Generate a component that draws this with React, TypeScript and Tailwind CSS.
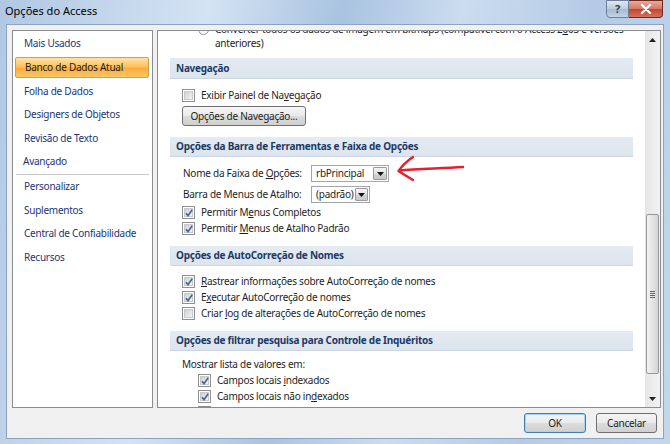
import type { ReactNode } from 'react'

const leftItems = [
  'Mais Usados',
  'Banco de Dados Atual',
  'Folha de Dados',
  'Designers de Objetos',
  'Revisão de Texto',
  'Avançado',
]
const leftItems2 = ['Personalizar', 'Suplementos', 'Central de Confiabilidade', 'Recursos']

function Check({ checked }: { checked?: boolean }) {
  return (
    <span className="relative flex h-[13px] w-[13px] shrink-0 items-center justify-center border border-[#8e8f8f] bg-white">
      <span className="h-[9px] w-[9px] border border-[#c7c9cc] bg-[linear-gradient(135deg,#cdd0d4,#f3f4f5)]" />
      {checked && (
        <svg className="absolute left-[1px] top-[1px]" width="10" height="10" viewBox="0 0 10 10">
          <path d="M2 5.2 L4 7.6 L8.2 1.8" fill="none" stroke="#4a5f8e" strokeWidth="1.6" />
        </svg>
      )}
    </span>
  )
}

function CheckRow({ checked, children, indent }: { checked?: boolean; children: ReactNode; indent?: boolean }) {
  return (
    <div className={`flex h-[16px] items-center gap-[6px] ${indent ? 'pl-[40px]' : 'pl-[24px]'}`}>
      <Check checked={checked} />
      <span>{children}</span>
    </div>
  )
}

function Section({ title, className = '' }: { title: string; className?: string }) {
  return (
    <div
      className={`mx-[12px] flex h-[20px] items-center border-b border-[#cdd6e0] bg-[linear-gradient(#e5ebf2,#dce4ed)] pl-[6px] font-bold text-[#1d3a66] ${className}`}
    >
      {title}
    </div>
  )
}

function Combo({ value, width }: { value: string; width: string }) {
  return (
    <div className={`flex h-[17px] ${width} border border-[#a5a5a5] bg-white`}>
      <span className="flex-1 pl-[4px] leading-[15px]">{value}</span>
      <span className="m-[1px] flex w-[14px] items-center justify-center rounded-[1px] border border-[#9a9a9a] bg-[linear-gradient(#f4f4f4,#e4e4e4_50%,#d3d3d3_51%,#c9c9c9)]">
        <svg width="7" height="4" viewBox="0 0 7 4">
          <path d="M0 0 H7 L3.5 4 Z" fill="#111" />
        </svg>
      </span>
    </div>
  )
}

function WinButton({ children, primary, className = '' }: { children: ReactNode; primary?: boolean; className?: string }) {
  return (
    <button
      className={`flex h-[20px] items-center justify-center rounded-[3px] border ${
        primary ? 'border-[#3c7fb1] shadow-[inset_0_0_0_1px_#9fd5f6]' : 'border-[#707070]'
      } bg-[linear-gradient(#f5f5f5,#eaeaea_48%,#dcdcdc_52%,#d0d0d0)] text-[#1e1e1e] ${className}`}
    >
      {children}
    </button>
  )
}

export default function App() {
  return (
    <div className="relative flex h-[444px] w-[670px] flex-col overflow-hidden bg-[linear-gradient(100deg,#b0c8e3,#d4e3f3_28%,#a9c3e0_46%,#cbdcef_62%,#b4cbe5_80%,#c4d7ec)] font-['Noto_Sans','Open_Sans',sans-serif] text-[10px] tracking-[-0.25px] text-[#1e1e1e]">
      {/* title bar */}
      <div className="flex h-[24px] shrink-0 items-center pb-[2px] pl-[5px] text-[11px] tracking-normal text-black">Opções do Access</div>
      <div className="absolute right-[7px] top-0 flex h-[18px]">
        <div className="flex w-[23px] items-center justify-center rounded-bl-[4px] border border-[#6b7f99] bg-[linear-gradient(#dfe8f3,#bccbdd_50%,#a7b9d0_51%,#c3d2e4)] text-[11px] font-bold text-[#2a3a4f]">
          ?
        </div>
        <div className="flex w-[34px] items-center justify-center rounded-br-[4px] border border-l-0 border-[#6a2a20] bg-[linear-gradient(#e9a99c,#d67a67_48%,#c4452f_52%,#d2735c)]">
          <svg width="12" height="10" viewBox="0 0 12 10">
            <path d="M2 1 L10 9 M10 1 L2 9" stroke="#fff" strokeWidth="2.4" strokeLinecap="round" />
          </svg>
        </div>
      </div>

      {/* client */}
      <div className="mx-[6px] mb-[5px] flex flex-1 flex-col border border-[#8ba3c0] bg-[#f0f0f0] pl-[5px] pr-[2px] pt-[5px]">
        <div className="flex h-[378px] gap-[4px]">
          {/* left nav */}
          <div className="w-[141px] border border-[#8a8d92] bg-white pt-[1.2px] text-[#1c3577]">
            {leftItems.map((label) => (
              <div key={label} className="flex h-[23.6px] items-center">
                {label === 'Banco de Dados Atual' ? (
                  <div className="ml-[2px] mr-[3px] flex h-[21px] flex-1 items-center rounded-[2px] border border-[#d99b45] bg-[linear-gradient(#ffe3a6,#ffc25e_45%,#ffab3a_55%,#ffc768)] pl-[9px] text-[#1a1a1a]">
                    {label}
                  </div>
                ) : (
                  <span className={label === 'Avançado' ? 'pl-[10px]' : 'pl-[11px]'}>{label}</span>
                )}
              </div>
            ))}
            <div className="mx-[3px] h-[1px] bg-[#c8c8c8]" />
            {leftItems2.map((label) => (
              <div key={label} className="flex h-[23.6px] items-center pl-[11px]">
                {label}
              </div>
            ))}
          </div>

          {/* right content */}
          <div className="flex flex-1 border border-[#8a8d92] bg-white">
            <div className="flex-1 overflow-hidden">
              <div className="-mt-[9px]">
                <div className="relative pl-[57px] leading-[14px]">
                  <span className="absolute left-[40px] top-[2px] h-[11px] w-[11px] rounded-full border border-[#9a9a9a] bg-[linear-gradient(135deg,#e6e6e6,#fff)]" />
                  <div>
                    Converter todos os dados de imagem em bitmaps (compatível com o Access 2<u>0</u>03 e versões
                  </div>
                  <div>anteriores)</div>
                </div>

                <Section title="Navegação" className="mt-[8px] h-[21px]" />
                <div className="mt-[8px]">
                  <CheckRow>
                    Exibir Painel de Na<u>v</u>egação
                  </CheckRow>
                </div>
                <WinButton className="ml-[24px] mt-[3px] h-[19px] w-[124px]">
                  Opções de Navegação...
                </WinButton>

                <Section title="Opções da Barra de Ferramentas e Faixa de Opções" className="mt-[11px]" />
                <div className="mt-[8px] flex h-[17px] items-center pl-[25px]">
                  <span className="w-[128px]">
                    Nome da Faixa de <u>O</u>pções:
                  </span>
                  <Combo value="rbPrincipal" width="w-[78px]" />
                </div>
                <div className="mt-[4px] flex h-[17px] items-center pl-[25px]">
                  <span className="w-[128px]">Barra de Menus de Atalho:</span>
                  <Combo value="(padrão)" width="w-[59px]" />
                </div>
                <div className="mt-[1px]">
                  <CheckRow checked>
                    Permitir M<u>e</u>nus Completos
                  </CheckRow>
                  <CheckRow checked>
                    Permitir <u>M</u>enus de Atalho Padrão
                  </CheckRow>
                </div>

                <Section title="Opções de AutoCorreção de Nomes" className="mt-[10px]" />
                <div className="mt-[7px]">
                  <CheckRow checked>
                    <u>R</u>astrear informações sobre AutoCorreção de nomes
                  </CheckRow>
                  <CheckRow checked>
                    E<u>x</u>ecutar AutoCorreção de nomes
                  </CheckRow>
                  <CheckRow>
                    Criar <u>l</u>og de alterações de AutoCorreção de nomes
                  </CheckRow>
                </div>

                <Section title="Opções de filtrar pesquisa para Controle de Inquéritos" className="mt-[10px]" />
                <div className="mt-[5px] flex h-[16px] items-center pl-[24px]">Mostrar lista de valores em:</div>
                <CheckRow checked indent>
                  Campos locais <u>i</u>ndexados
                </CheckRow>
                <CheckRow checked indent>
                  Campos locais não in<u>d</u>exados
                </CheckRow>
                <CheckRow indent>Campos ODBC</CheckRow>
              </div>
            </div>

            {/* scrollbar */}
            <div className="flex w-[15px] flex-col bg-[linear-gradient(90deg,#e6e6e6,#f2f2f2)]">
              <div className="flex h-[17px] items-center justify-center">
                <svg width="7" height="4" viewBox="0 0 7 4">
                  <path d="M0 4 H7 L3.5 0 Z" fill="#222" />
                </svg>
              </div>
              <div className="flex-1 pt-[166px]">
                <div className="mx-[1px] flex h-[160px] items-center justify-center rounded-[2px] border border-[#979797] bg-[linear-gradient(90deg,#f2f2f2,#e4e4e4_50%,#d4d4d4)]">
                  <div className="flex flex-col gap-[1px]">
                    <span className="h-[1px] w-[5px] bg-[#666]" />
                    <span className="h-[1px] w-[5px] bg-[#666]" />
                    <span className="h-[1px] w-[5px] bg-[#666]" />
                    <span className="h-[1px] w-[5px] bg-[#666]" />
                  </div>
                </div>
              </div>
              <div className="flex h-[17px] items-center justify-center">
                <svg width="7" height="4" viewBox="0 0 7 4">
                  <path d="M0 0 H7 L3.5 4 Z" fill="#222" />
                </svg>
              </div>
            </div>
          </div>
        </div>

        <div className="mt-[5px] flex justify-end gap-[10px] pr-[4px]">
          <WinButton primary className="w-[62px]">
            OK
          </WinButton>
          <WinButton className="w-[61px]">Cancelar</WinButton>
        </div>
      </div>

      {/* red annotation arrow */}
      <svg className="absolute left-[396px] top-[155px]" width="72" height="28" viewBox="0 0 72 28">
        <path
          d="M17 2 C11 6, 6 11, 2.5 16 C7 19, 12 22, 17 25 M3.5 15.5 C20 14, 42 13.5, 67 12"
          fill="none"
          stroke="#e5202e"
          strokeWidth="2.4"
          strokeLinecap="round"
          strokeLinejoin="round"
        />
      </svg>
    </div>
  )
}
